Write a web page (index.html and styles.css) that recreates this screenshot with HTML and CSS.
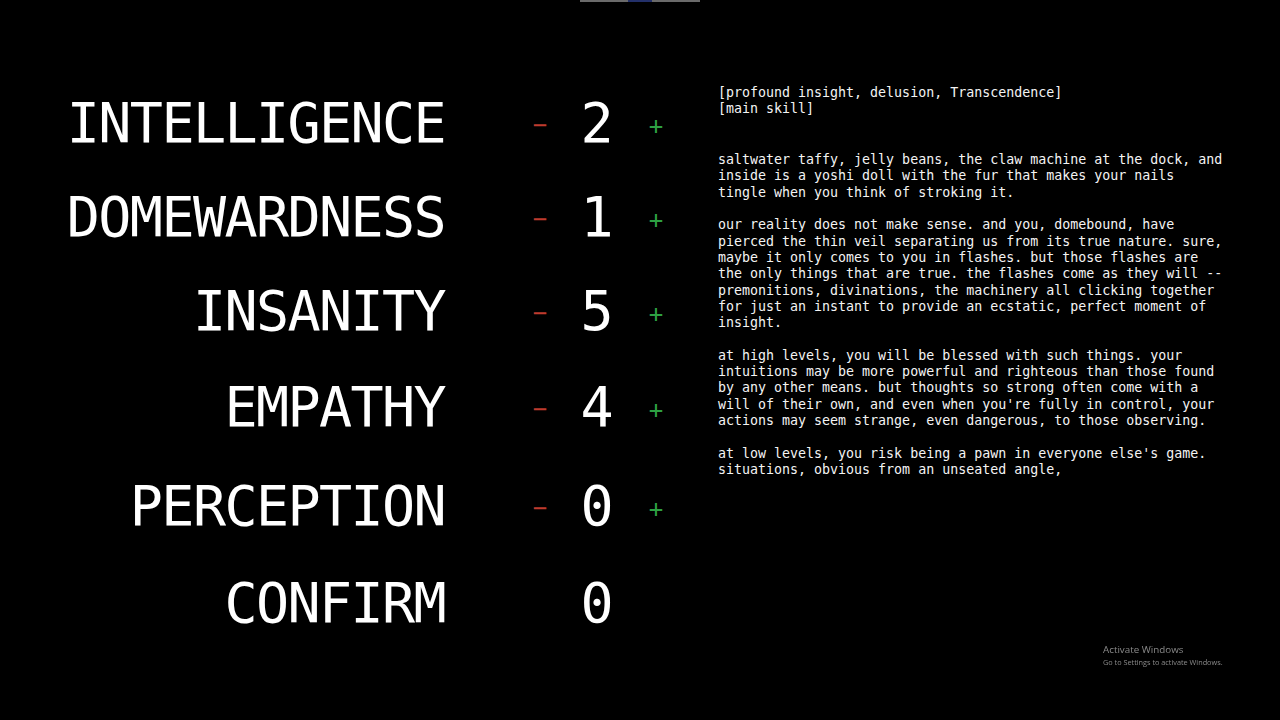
FILE: index.html
```html
<!DOCTYPE html>
<html lang="en">
<head>
    <meta charset="UTF-8">
    <meta name="viewport" content="width=device-width, initial-scale=1.0">
    <title>Character Sheet</title>
    <link rel="stylesheet" href="styles.css">
</head>
<body>
    <div class="scroll-track"><div class="scroll-thumb"></div></div>

    <div class="screen">
        <div class="stats">
            <div class="stat-name">INTELLIGENCE</div>
            <div class="stat-btn minus">−</div>
            <div class="stat-value">2</div>
            <div class="stat-btn plus">+</div>

            <div class="stat-name">DOMEWARDNESS</div>
            <div class="stat-btn minus">−</div>
            <div class="stat-value">1</div>
            <div class="stat-btn plus">+</div>

            <div class="stat-name">INSANITY</div>
            <div class="stat-btn minus">−</div>
            <div class="stat-value">5</div>
            <div class="stat-btn plus">+</div>

            <div class="stat-name">EMPATHY</div>
            <div class="stat-btn minus">−</div>
            <div class="stat-value">4</div>
            <div class="stat-btn plus">+</div>

            <div class="stat-name">PERCEPTION</div>
            <div class="stat-btn minus">−</div>
            <div class="stat-value">0</div>
            <div class="stat-btn plus">+</div>

            <div class="stat-name">CONFIRM</div>
            <div class="stat-btn"></div>
            <div class="stat-value">0</div>
            <div class="stat-btn"></div>
        </div>

        <div class="skill-text">
            <p>[profound insight, delusion, Transcendence]<br>[main skill]</p>
            <p class="lead">saltwater taffy, jelly beans, the claw machine at the dock, and inside is a yoshi doll with the fur that makes your nails tingle when you think of stroking it.</p>
            <p>our reality does not make sense. and you, domebound, have pierced the thin veil separating us from its true nature. sure, maybe it only comes to you in flashes. but those flashes are the only things that are true. the flashes come as they will -- premonitions, divinations, the machinery all clicking together for just an instant to provide an ecstatic, perfect moment of insight.</p>
            <p>at high levels, you will be blessed with such things. your intuitions may be more powerful and righteous than those found by any other means. but thoughts so strong often come with a will of their own, and even when you're fully in control, your actions may seem strange, even dangerous, to those observing.</p>
            <p>at low levels, you risk being a pawn in everyone else's game. situations, obvious from an unseated angle,</p>
        </div>
    </div>

    <div class="activate">
        <div class="activate-title">Activate Windows</div>
        <div class="activate-sub">Go to Settings to activate Windows.</div>
    </div>
</body>
</html>
```

FILE: styles.css
```css
body {
    margin: 0;
    padding: 0;
    background: #000000;
    color: #ffffff;
    height: 720px;
    overflow: hidden;
    font-family: "DejaVu Sans Mono", monospace;
}
.scroll-track {
    width: 120px;
    height: 2px;
    margin: 0 auto;
    background: #6a6a6a;
    display: flex;
    justify-content: center;
}
.scroll-thumb {
    width: 24px;
    height: 2px;
    background: #23306a;
}
.screen {
    display: flex;
    align-items: flex-start;
}

/* stat rows: name | minus | value | plus */
.stats {
    display: grid;
    grid-template-columns: 500px 80px 34px 84px;
    grid-template-rows: 94px 94px 95px 96px 103px 90px;
    align-items: center;
    margin-top: 74px;
}
.stat-name {
    font-size: 55px;
    line-height: 1;
    letter-spacing: -1.6px;
    text-align: right;
    padding-right: 55px;
}
.stat-value {
    font-size: 55px;
    line-height: 1;
    text-align: center;
}
.stat-btn {
    font-size: 24px;
    line-height: 1;
    text-align: center;
}
.minus {
    color: #bf3b2e;
    margin-top: 3px;
}
.plus {
    color: #2ea043;
    margin-top: 5px;
}

/* skill description */
.skill-text {
    margin-left: 20px;
    margin-top: 83px;
    width: 63.5ch;
    font-size: 13.3px;
    line-height: 16.3px;
    color: #f4f4f4;
}
.skill-text p {
    margin: 0 0 16.3px 0;
}
.skill-text .lead {
    margin-top: 34.6px;
}

.activate {
    position: fixed;
    left: 1103px;
    top: 643px;
    color: #8a8a8a;
    font-family: "Open Sans", sans-serif;
}
.activate-title {
    font-size: 9.8px;
    line-height: 14px;
}
.activate-sub {
    font-size: 7.3px;
    line-height: 10px;
}
```
